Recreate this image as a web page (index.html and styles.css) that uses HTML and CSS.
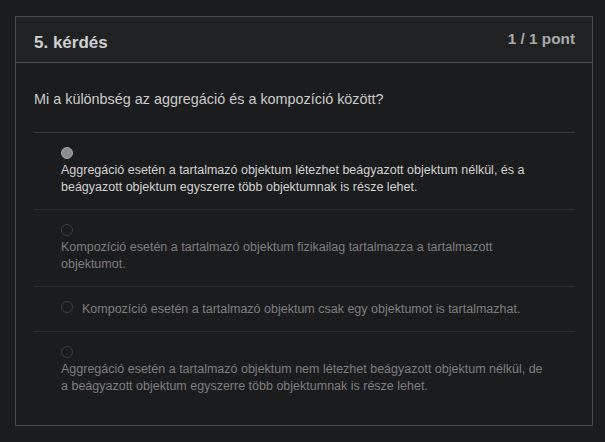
FILE: index.html
```html
<!DOCTYPE html>
<html lang="hu">
<head>
<meta charset="utf-8">
<title>5. kérdés</title>
<link rel="stylesheet" href="styles.css">
</head>
<body>
<section class="card">
  <header class="card-head">
    <h2 class="q-title">5. kérdés</h2>
    <span class="q-points">1 / 1 pont</span>
  </header>
  <div class="card-body">
    <p class="q-text">Mi a különbség az aggregáció és a kompozíció között?</p>
    <ul class="options">
      <li class="option selected">
        <span class="radio"></span><span class="label">Aggregáció esetén a tartalmazó objektum létezhet beágyazott objektum nélkül, és a beágyazott objektum egyszerre több objektumnak is része lehet.</span>
      </li>
      <li class="option">
        <span class="radio"></span><span class="label">Kompozíció esetén a tartalmazó objektum fizikailag tartalmazza a tartalmazott objektumot.</span>
      </li>
      <li class="option">
        <span class="radio"></span><span class="label">Kompozíció esetén a tartalmazó objektum csak egy objektumot is tartalmazhat.</span>
      </li>
      <li class="option">
        <span class="radio"></span><span class="label">Aggregáció esetén a tartalmazó objektum nem létezhet beágyazott objektum nélkül, de a beágyazott objektum egyszerre több objektumnak is része lehet.</span>
      </li>
    </ul>
  </div>
</section>
</body>
</html>
```

FILE: styles.css
```css
html, body {
  margin: 0;
  padding: 0;
  background: #1b1c1e;
}
body {
  padding: 16px 12px 0 15px;
  font-family: "Liberation Sans", Arial, sans-serif;
  color: #c9c9c9;
}
.card {
  border: 1px solid #4a4b4d;
  background: #1b1c1e;
}
.card-head {
  display: flex;
  justify-content: space-between;
  align-items: flex-start;
  background: #202123;
  border-bottom: 1px solid #4a4b4d;
  padding: 0 17px 0 18px;
  height: 45px;
}
.q-title {
  margin: 16px 0 0;
  font-size: 17px;
  line-height: 20px;
  font-weight: bold;
  color: #cfcfcf;
}
.q-points {
  margin-top: 13px;
  font-size: 15.3px;
  line-height: 18px;
  font-weight: bold;
  color: #a9a9a9;
}
.card-body {
  padding: 26px 17px 17px 18px;
}
.q-text {
  margin: 0 0 23px;
  font-size: 14.4px;
  line-height: 20px;
  color: #cbcbcb;
}
.options {
  list-style: none;
  margin: 0;
  padding: 0;
  border-top: 1px solid #3b3c3e;
}
.option {
  padding: 12px 24px 13px 27px;
  font-size: 12.5px;
  line-height: 17px;
  color: #7e7e7e;
  border-bottom: 1px solid #2c2d2f;
}
.option:last-child {
  border-bottom: none;
}
.radio {
  display: inline-block;
  box-sizing: border-box;
  width: 12px;
  height: 12px;
  border-radius: 50%;
  border: 1px solid #3f4042;
  vertical-align: -2px;
  margin-right: 9px;
}
.label {
  display: inline-block;
  vertical-align: -2px;
}
.option.selected {
  color: #d2d2d2;
}
.option.selected .radio {
  background: #8b8b90;
  border-color: #a3a3a8;
}
```
